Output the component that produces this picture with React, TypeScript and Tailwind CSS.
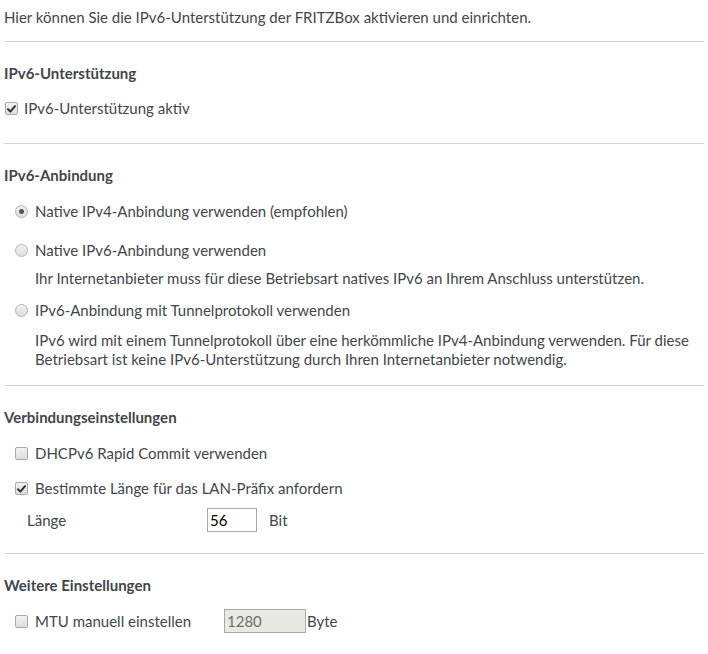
import React from "react";

const font = { fontFamily: '"Source Sans Pro", Lato, "Liberation Sans", sans-serif' };

function Check({ checked }: { checked?: boolean }) {
  return (
    <span className="inline-flex h-[13px] w-[13px] shrink-0 items-center justify-center rounded-[2px] border border-[#a9a9a9] bg-gradient-to-b from-[#f2f2f2] to-[#dcdcdc]">
      {checked && (
        <svg width="9" height="8" viewBox="0 0 9 8">
          <path d="M1 4.2 L3.4 6.6 L8 1.2" fill="none" stroke="#333" strokeWidth="2" strokeLinecap="round" strokeLinejoin="round" />
        </svg>
      )}
    </span>
  );
}

function Radio({ checked }: { checked?: boolean }) {
  return (
    <span className="inline-flex h-[13px] w-[13px] shrink-0 items-center justify-center rounded-full border border-[#b5b5b5] bg-gradient-to-b from-[#f2f2f2] to-[#dedede]">
      {checked && <span className="h-[5px] w-[5px] rounded-full bg-[#555]" />}
    </span>
  );
}

function Hr({ mt }: { mt: string }) {
  return <div className={`h-px w-full bg-[#d4d4d4] ${mt}`} />;
}

export default function App() {
  return (
    <div className="w-[708px] h-[654px] bg-white text-[15px] leading-[19px] text-[#3f464c] px-[4px] pt-[8px]" style={font}>
      <div>Hier können Sie die IPv6-Unterstützung der FRITZBox aktivieren und einrichten.</div>
      <Hr mt="mt-[14px]" />

      <div className="mt-[22px] font-bold">IPv6-Unterstützung</div>
      <div className="mt-[16px] flex items-center gap-[6px] pl-[1px]">
        <Check checked />
        <span>IPv6-Unterstützung aktiv</span>
      </div>
      <Hr mt="mt-[25px]" />

      <div className="mt-[22px] font-bold">IPv6-Anbindung</div>
      <div className="mt-[17px] flex items-center gap-[7px] pl-[11px]">
        <Radio checked />
        <span>Native IPv4-Anbindung verwenden (empfohlen)</span>
      </div>
      <div className="mt-[20px] flex items-center gap-[7px] pl-[11px]">
        <Radio />
        <span>Native IPv6-Anbindung verwenden</span>
      </div>
      <div className="mt-[9px] pl-[31px]">
        Ihr Internetanbieter muss für diese Betriebsart natives IPv6 an Ihrem Anschluss unterstützen.
      </div>
      <div className="mt-[13px] flex items-center gap-[7px] pl-[11px]">
        <Radio />
        <span>IPv6-Anbindung mit Tunnelprotokoll verwenden</span>
      </div>
      <div className="mt-[11px] pl-[31px]">
        IPv6 wird mit einem Tunnelprotokoll über eine herkömmliche IPv4-Anbindung verwenden. Für diese Betriebsart ist keine IPv6-Unterstützung durch Ihren Internetanbieter notwendig.
      </div>
      <Hr mt="mt-[16px]" />

      <div className="mt-[22px] font-bold">Verbindungseinstellungen</div>
      <div className="mt-[17px] flex items-center gap-[7px] pl-[11px]">
        <Check />
        <span>DHCPv6 Rapid Commit verwenden</span>
      </div>
      <div className="mt-[16px] flex items-center gap-[7px] pl-[11px]">
        <Check checked />
        <span>Bestimmte Länge für das LAN-Präfix anfordern</span>
      </div>
      <div className="mt-[10px] flex items-center pl-[23px]">
        <span className="w-[180px]">Länge</span>
        <div className="flex h-[24px] w-[50px] items-center border border-[#a9a9a9] bg-white pl-[2px] text-black">56</div>
        <span className="ml-[12px]">Bit</span>
      </div>
      <Hr mt="mt-[21px]" />

      <div className="mt-[22px] font-bold">Weitere Einstellungen</div>
      <div className="mt-[14px] flex items-center pl-[11px]">
        <Check />
        <span className="ml-[7px] w-[189px]">MTU manuell einstellen</span>
        <div className="flex h-[24px] w-[82px] items-center border border-[#a9a9a9] bg-[#e9e9e4] pl-[2px] text-[#6d6d6d]">1280</div>
        <span className="ml-[1px]">Byte</span>
      </div>
    </div>
  );
}
